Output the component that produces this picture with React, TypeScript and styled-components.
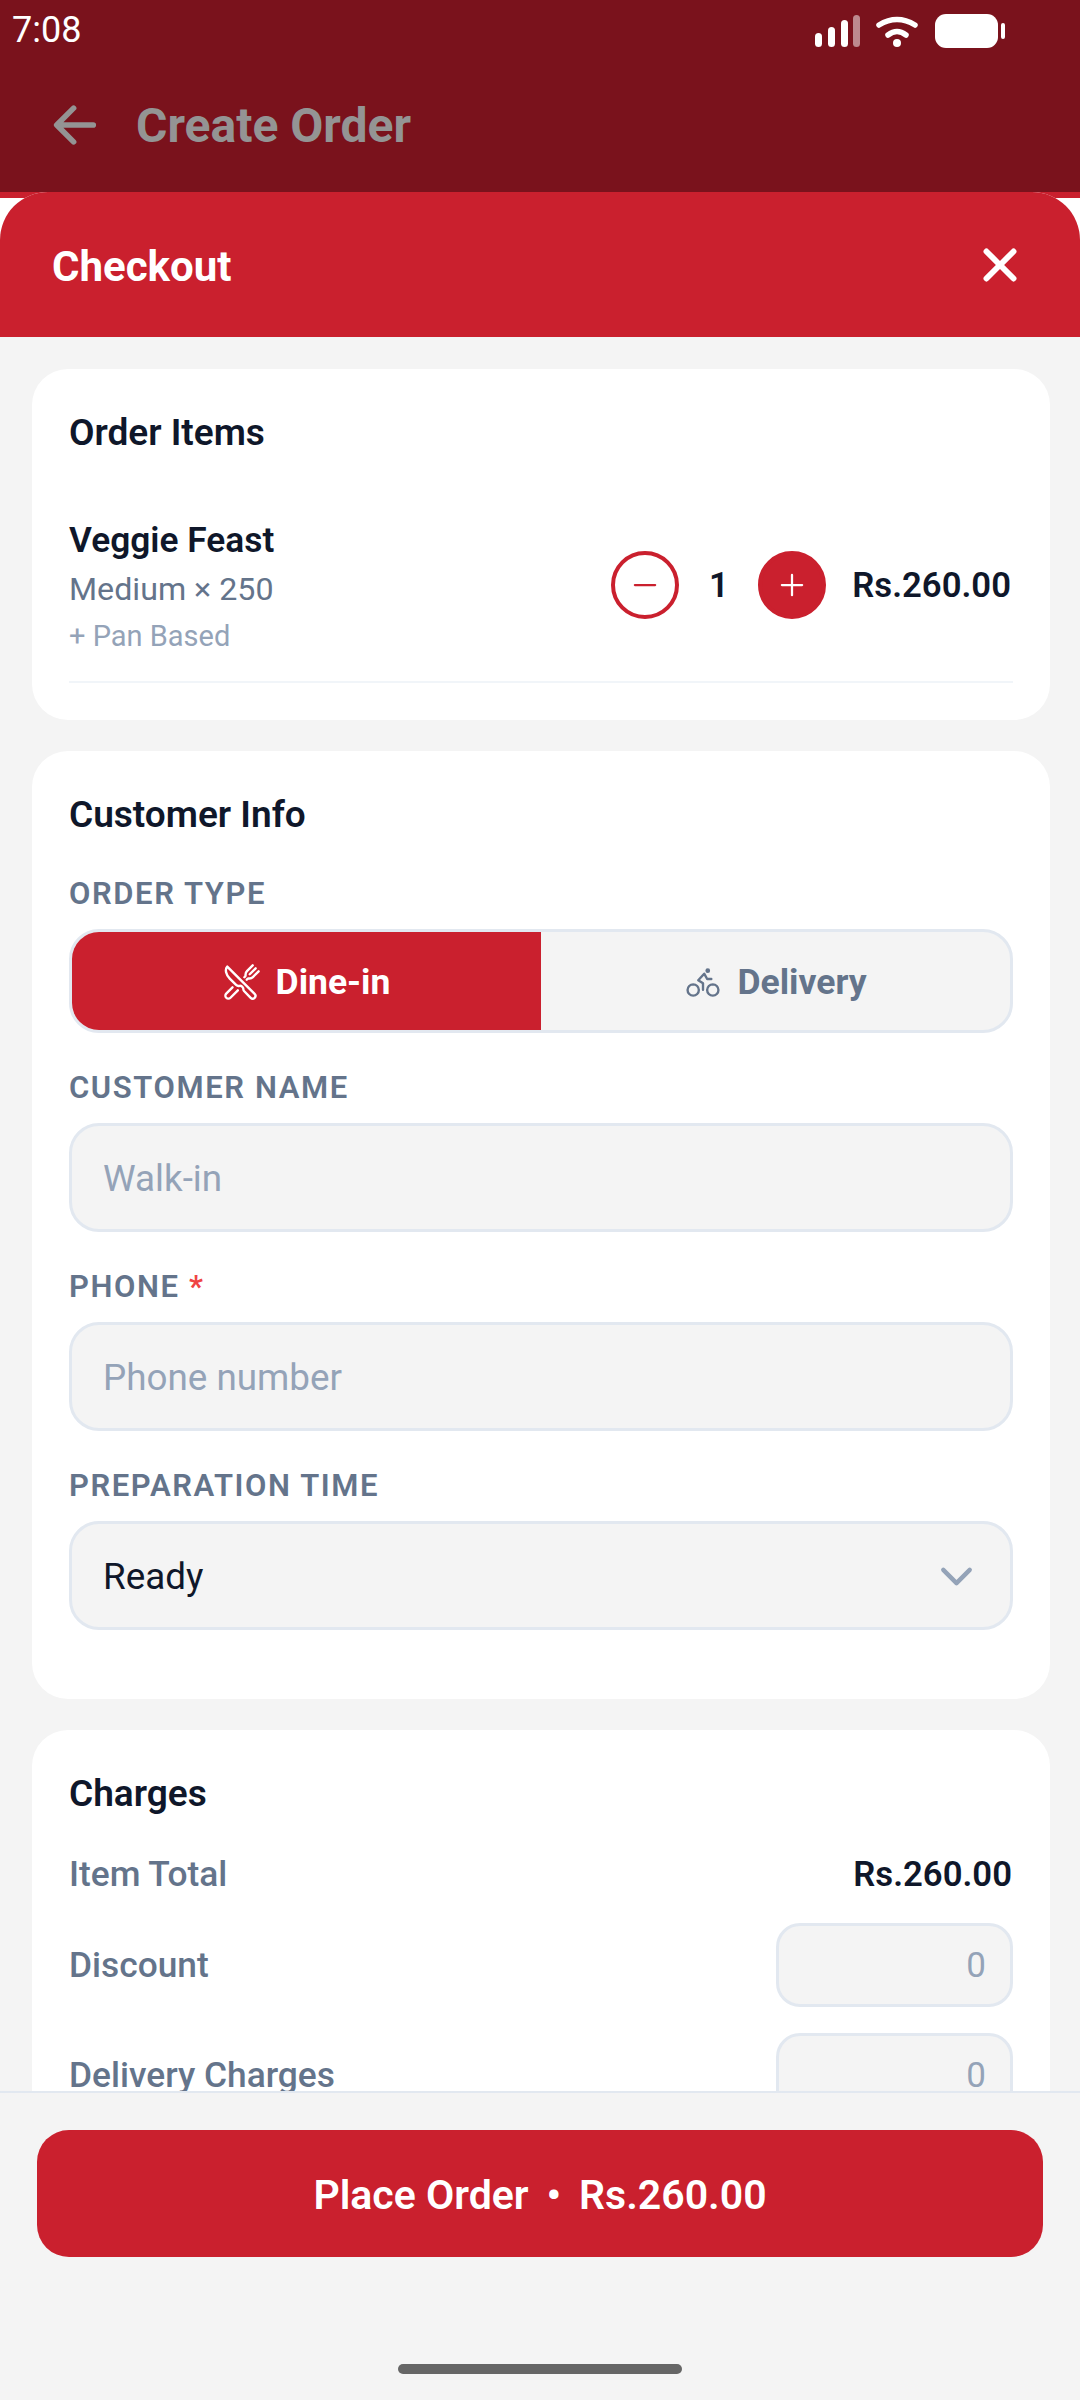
import { createGlobalStyle, styled } from "styled-components";
import { IoAdd, IoArrowBack, IoBicycleOutline, IoChevronDown, IoClose, IoRemove, IoRestaurantOutline } from "react-icons/io5";

const GlobalStyle = createGlobalStyle`
  html, body {
    margin: 0;
    padding: 0;
    background: #f4f4f4;
    font-family: Roboto, "Liberation Sans", sans-serif;
  }
  * {
    box-sizing: border-box;
  }
`;

const RED = "#ca202e";
const DARK_RED = "#7a121c";
const INK = "#0f172a";
const SLATE = "#64748b";
const MUTED = "#94a3b8";
const LINE = "#e2e8f0";
const FIELD = "#f4f4f4";

const Screen = styled.div`
  width: 1080px;
  height: 2400px;
  overflow: hidden;
  display: flex;
  flex-direction: column;
  background: ${FIELD};
`;

const TopBar = styled.header`
  height: 192px;
  flex: none;
  background: ${DARK_RED};
  display: flex;
  flex-direction: column;
`;

const StatusBar = styled.div`
  height: 60px;
  padding: 0 70px 0 12px;
  display: flex;
  align-items: center;
  justify-content: space-between;
  color: #fff;
  font-size: 36px;
  line-height: 60px;
`;

const AppBar = styled.div`
  height: 128px;
  padding: 2px 0 0 45px;
  display: flex;
  align-items: center;
  gap: 31px;
  color: #949494;
  font-size: 48px;
  font-weight: 700;
`;

const SheetBackdrop = styled.div`
  flex: 1;
  min-height: 0;
  display: flex;
  background: linear-gradient(${RED} 6px, #fff 6px);
`;

const Sheet = styled.section`
  flex: 1;
  min-width: 0;
  display: flex;
  flex-direction: column;
  background: ${FIELD};
  border-radius: 48px 48px 0 0;
  overflow: hidden;
`;

const SheetHeader = styled.div`
  height: 145px;
  flex: none;
  padding: 0 49px 0 52px;
  background: ${RED};
  color: #fff;
  display: flex;
  align-items: center;
  justify-content: space-between;
`;

const SheetTitle = styled.h1`
  margin: 0;
  padding-top: 4px;
  font-size: 42px;
  font-weight: 700;
`;

const ScrollArea = styled.div`
  flex: 1;
  min-height: 0;
  overflow: hidden;
  padding: 32px 30px 32px 32px;
  display: flex;
  flex-direction: column;
  gap: 31px;
`;

const Card = styled.div`
  flex: none;
  background: #fff;
  border-radius: 36px;
  padding: 42px 37px 37px;
  display: flex;
  flex-direction: column;
`;

const CardTitle = styled.h2`
  margin: 0;
  color: ${INK};
  font-size: 37px;
  line-height: 44px;
  font-weight: 600;
`;

const ItemRow = styled.div`
  margin-top: 63px;
  padding-bottom: 24px;
  border-bottom: 2px solid #f1f5f9;
  display: flex;
  align-items: center;
  justify-content: space-between;
`;

const ItemInfo = styled.div`
  display: flex;
  flex-direction: column;
`;

const ItemName = styled.div`
  color: ${INK};
  font-size: 35.3px;
  line-height: 44px;
  font-weight: 600;
`;

const ItemVariant = styled.div`
  margin-top: 2px;
  margin-bottom: 1px;
  color: ${SLATE};
  font-size: 32.2px;
  line-height: 50px;
`;

const ItemAddon = styled.div`
  color: ${MUTED};
  font-size: 29px;
  line-height: 42px;
`;

const Stepper = styled.div`
  margin: 0 1px 5px 0;
  display: flex;
  align-items: center;
`;

const StepButton = styled.button<{ $filled?: boolean }>`
  width: 68px;
  height: 68px;
  padding: 0;
  border-radius: 50%;
  border: 4px solid ${RED};
  background: ${(p) => (p.$filled ? RED : "#fff")};
  color: ${(p) => (p.$filled ? "#fff" : RED)};
  display: flex;
  align-items: center;
  justify-content: center;
`;

const Qty = styled.div`
  width: 79px;
  text-align: center;
  color: ${INK};
  font-size: 34.7px;
  font-weight: 600;
`;

const Amount = styled.div`
  margin-right: 1px;
  color: ${INK};
  font-size: 34.7px;
  font-weight: 600;
`;

const ItemPrice = styled(Amount)`
  margin-left: 26px;
`;

const FieldLabel = styled.div`
  padding-top: 1px;
  color: ${SLATE};
  font-size: 31px;
  line-height: 36px;
  font-weight: 600;
  letter-spacing: 1.6px;
  margin-bottom: 17px;
`;

const OrderTypeLabel = styled(FieldLabel)`
  margin-top: 38px;
`;

const Required = styled.span`
  color: #ef4444;
`;

const Toggle = styled.div`
  height: 104px;
  border: 3px solid ${LINE};
  border-radius: 30px;
  overflow: hidden;
  display: flex;
  background: ${FIELD};
  margin-bottom: 36px;
`;

const ToggleOption = styled.div<{ $active?: boolean }>`
  flex: 1;
  padding-top: 2px;
  display: flex;
  align-items: center;
  justify-content: center;
  gap: 15px;
  background: ${(p) => (p.$active ? RED : "transparent")};
  color: ${(p) => (p.$active ? "#fff" : SLATE)};
  font-size: 35.5px;
  font-weight: 700;
`;

const TextField = styled.div<{ $filled?: boolean }>`
  height: 109px;
  padding: 2px 30px 0 31px;
  border: 3px solid ${LINE};
  border-radius: 30px;
  background: ${FIELD};
  color: ${(p) => (p.$filled ? INK : MUTED)};
  font-size: 36.8px;
  display: flex;
  align-items: center;
  justify-content: space-between;
  margin-bottom: 36px;
`;

const LastField = styled(TextField)`
  margin-bottom: 32px;
`;

const ChargeRow = styled.div`
  min-height: 46px;
  display: flex;
  align-items: center;
  justify-content: space-between;
  color: ${SLATE};
  font-size: 35.3px;
  font-weight: 500;
  margin-bottom: 26px;
`;

const FirstChargeRow = styled(ChargeRow)`
  margin-top: 35px;
`;

const ChargeInput = styled.div`
  width: 237px;
  height: 84px;
  padding: 0 24px;
  border: 3px solid ${LINE};
  border-radius: 24px;
  background: ${FIELD};
  color: ${MUTED};
  font-size: 35px;
  font-weight: 400;
  display: flex;
  align-items: center;
  justify-content: flex-end;
`;

const Footer = styled.footer`
  height: 309px;
  flex: none;
  padding: 37px 37px 0;
  border-top: 2px solid ${LINE};
  background: ${FIELD};
  display: flex;
  flex-direction: column;
  align-items: center;
`;

const PlaceOrder = styled.button`
  width: 100%;
  height: 127px;
  flex: none;
  padding: 2px 0 0;
  border: 0;
  border-radius: 32px;
  background: ${RED};
  color: #fff;
  font-family: inherit;
  font-size: 41px;
  font-weight: 600;
  display: flex;
  align-items: center;
  justify-content: center;
  gap: 18px;
`;

const HomeIndicator = styled.div`
  width: 284px;
  height: 10px;
  margin-top: 107px;
  border-radius: 5px;
  background: #666;
`;

// status bar glyphs, drawn on the screen's own x/y minus the svg's left edge
const StatusIcons = () => (
  <svg width="200" height="60" viewBox="810 0 200 60">
    <g fill="#fff">
      <rect x="815" y="33" width="7" height="14" rx="3.5" />
      <rect x="828" y="27" width="7" height="20" rx="3.5" />
      <rect x="841" y="20" width="7" height="27" rx="3.5" />
      <rect x="853" y="15" width="7" height="32" rx="3.5" opacity="0.5" />
      <circle cx="897" cy="43" r="4" />
      <rect x="935" y="14" width="63" height="34" rx="11" />
      <rect x="1001" y="23" width="4" height="16" rx="2" />
    </g>
    <g fill="none" stroke="#fff" strokeWidth="5.5" strokeLinecap="round">
      <path d="M879 25q18-11 36 0" />
      <path d="M888 35q9-7 18 0" />
    </g>
  </svg>
);

export default function App() {
  return (
    <Screen>
      <GlobalStyle />
      <TopBar>
        <StatusBar>
          7:08
          <StatusIcons />
        </StatusBar>
        <AppBar>
          <IoArrowBack size={60} />
          Create Order
        </AppBar>
      </TopBar>
      <SheetBackdrop>
        <Sheet>
          <SheetHeader>
            <SheetTitle>Checkout</SheetTitle>
            <IoClose size={62} />
          </SheetHeader>
          <ScrollArea>
            <Card>
              <CardTitle>Order Items</CardTitle>
              <ItemRow>
                <ItemInfo>
                  <ItemName>Veggie Feast</ItemName>
                  <ItemVariant>Medium × 250</ItemVariant>
                  <ItemAddon>+ Pan Based</ItemAddon>
                </ItemInfo>
                <Stepper>
                  <StepButton><IoRemove size={36} /></StepButton>
                  <Qty>1</Qty>
                  <StepButton $filled><IoAdd size={36} /></StepButton>
                  <ItemPrice>Rs.260.00</ItemPrice>
                </Stepper>
              </ItemRow>
            </Card>
            <Card>
              <CardTitle>Customer Info</CardTitle>
              <OrderTypeLabel>ORDER TYPE</OrderTypeLabel>
              <Toggle>
                <ToggleOption $active><IoRestaurantOutline size={38} />Dine-in</ToggleOption>
                <ToggleOption><IoBicycleOutline size={38} />Delivery</ToggleOption>
              </Toggle>
              <FieldLabel>CUSTOMER NAME</FieldLabel>
              <TextField>Walk-in</TextField>
              <FieldLabel>PHONE <Required>*</Required></FieldLabel>
              <TextField>Phone number</TextField>
              <FieldLabel>PREPARATION TIME</FieldLabel>
              <LastField $filled>
                Ready
                <IoChevronDown size={47} color={MUTED} />
              </LastField>
            </Card>
            <Card>
              <CardTitle>Charges</CardTitle>
              <FirstChargeRow>Item Total<Amount>Rs.260.00</Amount></FirstChargeRow>
              <ChargeRow>Discount<ChargeInput>0</ChargeInput></ChargeRow>
              <ChargeRow>Delivery Charges<ChargeInput>0</ChargeInput></ChargeRow>
            </Card>
          </ScrollArea>
          <Footer>
            <PlaceOrder>
              <span>Place Order</span>
              <span>•</span>
              <span>Rs.260.00</span>
            </PlaceOrder>
            <HomeIndicator />
          </Footer>
        </Sheet>
      </SheetBackdrop>
    </Screen>
  );
}
